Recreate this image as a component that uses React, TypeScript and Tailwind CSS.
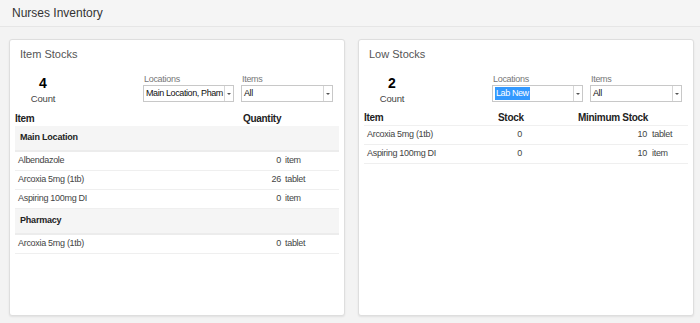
import React from "react";

const font = { fontFamily: '"Liberation Sans", Arial, sans-serif' };

function Select({ w, value, highlight }: { w: number; value: string; highlight?: boolean }) {
  return (
    <div
      className="flex h-[17px] items-stretch border border-[#c8c8c8] bg-white"
      style={{ width: w }}
    >
      <div className="flex flex-1 items-center overflow-hidden whitespace-nowrap pl-[2px] text-[9px] tracking-[-0.4px] text-[#111]">
        {highlight ? (
          <span className="bg-[#3399ff] px-[1px] leading-[13px] text-white">{value}</span>
        ) : (
          <span>{value}</span>
        )}
      </div>
      <div className="flex w-[9px] items-center justify-center border-l border-[#d6d6d6]">
        <div className="h-0 w-0 border-x-[2px] border-t-[2px] border-x-transparent border-t-[#555]" />
      </div>
    </div>
  );
}

function Filters({ value, highlight }: { value: string; highlight?: boolean }) {
  return (
    <div className="flex gap-[7px]">
      <div className="flex flex-col">
        <div className="h-[11px] pl-[1px] text-[9px] leading-[11px] tracking-[-0.3px] text-[#777]">Locations</div>
        <Select w={91} value={value} highlight={highlight} />
      </div>
      <div className="flex flex-col">
        <div className="h-[11px] pl-[1px] text-[9px] leading-[11px] tracking-[-0.3px] text-[#777]">Items</div>
        <Select w={92} value="All" />
      </div>
    </div>
  );
}

function Count({ n }: { n: string }) {
  return (
    <div className="flex w-[50px] flex-col items-center">
      <div className="text-[14px] font-bold leading-[16px] text-black">{n}</div>
      <div className="mt-[2px] text-[9.5px] leading-[12px] tracking-[-0.2px] text-[#444]">Count</div>
    </div>
  );
}

function QtyRow({ item, n, unit }: { item: string; n: string; unit: string }) {
  return (
    <div className="flex h-[19px] items-center border-b border-[#efefef] text-[9px] tracking-[-0.3px] text-[#444]">
      <div className="w-[228px] pl-[3px]">{item}</div>
      <div className="w-[38px] text-right">{n}</div>
      <div className="pl-[4px]">{unit}</div>
    </div>
  );
}

function Group({ name }: { name: string }) {
  return (
    <div className="flex h-[26px] items-center border-b-2 border-[#ececec] bg-[#f5f5f5] pl-[5px] text-[9px] font-bold tracking-[-0.2px] text-[#222]">
      {name}
    </div>
  );
}

function LowRow({ item, stock, min, unit }: { item: string; stock: string; min: string; unit: string }) {
  return (
    <div className="flex h-[19px] items-center border-b border-[#efefef] text-[9px] tracking-[-0.3px] text-[#444]">
      <div className="w-[134px] pl-[3px]">{item}</div>
      <div className="w-[29px] pr-[5px] text-right">{stock}</div>
      <div className="w-[51px]" />
      <div className="w-[70px] pr-[1px] text-right">{min}</div>
      <div className="pl-[4px]">{unit}</div>
    </div>
  );
}

export default function App() {
  return (
    <div className="h-[323px] w-[700px] overflow-hidden bg-[#f3f3f3]" style={font}>
      <div className="flex h-[27px] items-center border-b border-[#e6e6e6] bg-[#f5f5f5] pl-[12px] text-[12px] text-[#333]">
        Nurses Inventory
      </div>
      <div className="flex gap-[13px] pl-[9px] pr-[6px] pt-[12px]">
        <div className="h-[277px] w-[336px] rounded-[3px] border border-[#dedede] bg-white shadow-[0_1px_2px_rgba(0,0,0,0.08)]">
          <div className="pl-[10px] pt-[7px] text-[11px] leading-[14px] text-[#555]">Item Stocks</div>
          <div className="mt-[14px] flex pl-[8px]">
            <Count n="4" />
            <div className="ml-[75px] -mt-[1px]">
              <Filters value="Main Location, Pham" />
            </div>
          </div>
          <div className="mx-[5px] mt-[5px]">
            <div className="flex h-[16px] items-center text-[10px] font-bold tracking-[-0.3px] text-[#222]">
              <div className="w-[228px]">Item</div>
              <div>Quantity</div>
            </div>
            <Group name="Main Location" />
            <QtyRow item="Albendazole" n="0" unit="item" />
            <QtyRow item="Arcoxia 5mg (1tb)" n="26" unit="tablet" />
            <QtyRow item="Aspiring 100mg DI" n="0" unit="item" />
            <Group name="Pharmacy" />
            <QtyRow item="Arcoxia 5mg (1tb)" n="0" unit="tablet" />
          </div>
        </div>
        <div className="h-[277px] w-[336px] rounded-[3px] border border-[#dedede] bg-white shadow-[0_1px_2px_rgba(0,0,0,0.08)]">
          <div className="pl-[10px] pt-[7px] text-[11px] leading-[14px] text-[#555]">Low Stocks</div>
          <div className="mt-[14px] flex pl-[8px]">
            <Count n="2" />
            <div className="ml-[75px] -mt-[1px]">
              <Filters value="Lab New" highlight />
            </div>
          </div>
          <div className="mx-[5px] mt-[5px]">
            <div className="flex h-[16px] items-center border-b border-[#f0f0f0] text-[10px] font-bold tracking-[-0.3px] text-[#222]">
              <div className="w-[134px]">Item</div>
              <div className="w-[80px]">Stock</div>
              <div>Minimum Stock</div>
            </div>
            <LowRow item="Arcoxia 5mg (1tb)" stock="0" min="10" unit="tablet" />
            <LowRow item="Aspiring 100mg DI" stock="0" min="10" unit="item" />
          </div>
        </div>
      </div>
    </div>
  );
}
